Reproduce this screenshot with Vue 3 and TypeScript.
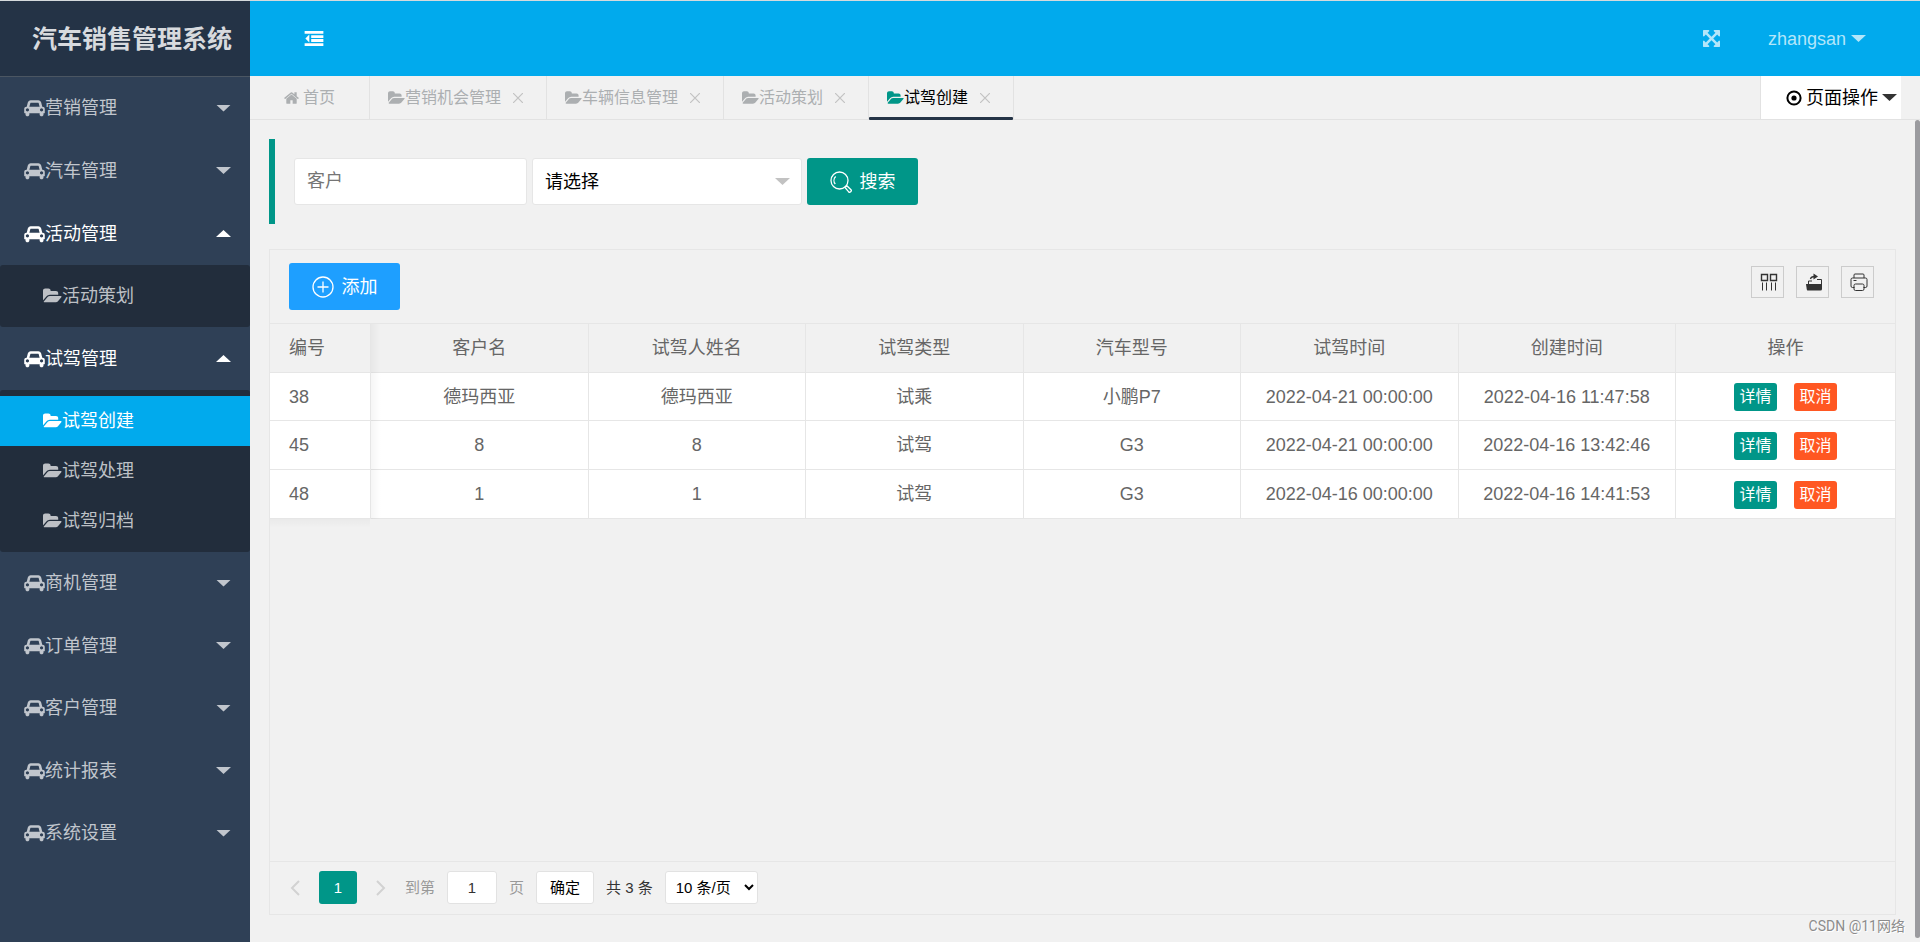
<script setup lang="ts">
import { ref } from 'vue'

interface MenuChild { label: string; active?: boolean }
interface MenuGroup { label: string; open?: boolean; children?: MenuChild[] }
interface Tab { label: string; active?: boolean }
interface DriveRow {
  id: number
  customer: string
  driver: string
  type: string
  model: string
  driveTime: string
  createTime: string
}

const carPath = 'M480 1088q0-66-47-113t-113-47-113 47-47 113 47 113 113 47 113-47 47-113zm36-320h1016l-89-357q-2-8-14-17.5t-21-9.5h-768q-9 0-21 9.5t-14 17.5zm1372 320q0-66-47-113t-113-47-113 47-47 113 47 113 113 47 113-47 47-113zm160-96v384q0 14-9 23t-23 9h-96v128q0 80-56 136t-136 56-136-56-56-136v-128h-1024v128q0 80-56 136t-136 56-136-56-56-136v-128h-96q-14 0-23-9t-9-23v-384q0-93 65.5-158.5t158.5-65.5h28l105-419q23-94 104-157.5t179-63.5h768q98 0 179 63.5t104 157.5l105 419h28q93 0 158.5 65.5t65.5 158.5z'
const folderPath = 'M1815 952q0 31-31 66l-336 396q-43 51-120.5 86.5t-143.5 35.5h-1088q-34 0-60.5-13t-26.5-43q0-31 31-66l336-396q43-51 120.5-86.5t143.5-35.5h1088q34 0 60.5 13t26.5 43zm-343-344v160h-832q-94 0-197 47.5t-164 119.5l-337 396-5 6q0-4-.5-12.5t-.5-12.5v-960q0-92 66-158t158-66h320q92 0 158 66t66 158v32h544q92 0 158 66t66 158z'
const homePath = 'M1472 992v480q0 26-19 45t-45 19h-384v-384h-256v384h-384q-26 0-45-19t-19-45v-480q0-1 .5-3t.5-3l575-474 575 474q1 2 1 6zm223-69l-62 74q-8 9-21 11h-3q-13 0-21-7l-692-577-692 577q-12 8-24 7-13-2-21-11l-62-74q-8-10-7-23.5t11-21.5l719-599q32-26 76-26t76 26l244 204v-195q0-14 9-23t23-9h192q14 0 23 9t9 23v408l219 182q10 8 11 21.5t-7 23.5z'
const expandPath = 'M1411 541l-355 355 355 355 144-144q29-31 70-14 39 17 39 59v448q0 26-19 45t-45 19h-448q-42 0-59-40-17-39 14-69l144-144-355-355-355 355 144 144q31 30 14 69-17 40-59 40h-448q-26 0-45-19t-19-45v-448q0-42 40-59 39-17 69 14l144 144 355-355-355-355-144 144q-19 19-45 19-12 0-24-5-40-17-40-59v-448q0-26 19-45t45-19h448q42 0 59 40 17 39-14 69l-144 144 355 355 355-355-144-144q-31-30-14-69 17-40 59-40h448q26 0 45 19t19 45v448q0 42-39 59-13 5-25 5-26 0-45-19z'

const menu: MenuGroup[] = [
  { label: '营销管理' },
  { label: '汽车管理' },
  { label: '活动管理', open: true, children: [{ label: '活动策划' }] },
  {
    label: '试驾管理',
    open: true,
    children: [{ label: '试驾创建', active: true }, { label: '试驾处理' }, { label: '试驾归档' }],
  },
  { label: '商机管理' },
  { label: '订单管理' },
  { label: '客户管理' },
  { label: '统计报表' },
  { label: '系统设置' },
]

const tabs: Tab[] = [
  { label: '营销机会管理' },
  { label: '车辆信息管理' },
  { label: '活动策划' },
  { label: '试驾创建', active: true },
]

const columns: string[] = ['编号', '客户名', '试驾人姓名', '试驾类型', '汽车型号', '试驾时间', '创建时间', '操作']

const rows: DriveRow[] = [
  { id: 38, customer: '德玛西亚', driver: '德玛西亚', type: '试乘', model: '小鹏P7', driveTime: '2022-04-21 00:00:00', createTime: '2022-04-16 11:47:58' },
  { id: 45, customer: '8', driver: '8', type: '试驾', model: 'G3', driveTime: '2022-04-21 00:00:00', createTime: '2022-04-16 13:42:46' },
  { id: 48, customer: '1', driver: '1', type: '试驾', model: 'G3', driveTime: '2022-04-16 00:00:00', createTime: '2022-04-16 14:41:53' },
]

const customer = ref('')
const driveType = ref('')
const jumpPage = ref('1')
const pageSize = ref('10')
</script>

<template>
  <div class="app">
    <aside class="sidebar">
      <h1 class="logo">汽车销售管理系统</h1>
      <nav class="menu">
        <div v-for="group in menu" :key="group.label" class="group" :class="{ open: group.open }">
          <button type="button" class="group-title" :aria-expanded="!!group.open">
            <svg class="car" viewBox="0 0 2048 1792" aria-hidden="true"><path :d="carPath" /></svg>
            <span>{{ group.label }}</span>
            <i class="caret"></i>
          </button>
          <div v-if="group.children" class="submenu">
            <a v-for="item in group.children" :key="item.label" href="#" class="sub-item" :class="{ active: item.active }">
              <svg class="folder" viewBox="-64 0 1920 1792" aria-hidden="true"><path :d="folderPath" /></svg>
              <span>{{ item.label }}</span>
            </a>
          </div>
        </div>
      </nav>
    </aside>

    <div class="main">
      <header class="topbar">
        <button type="button" class="icon-btn" aria-label="收起菜单">
          <svg class="outdent" viewBox="0 0 20 16" aria-hidden="true">
            <path d="M0 0h20v3H0zM7 4.400h13v3H7zM7 8.600h13v3H7zM0 13h20v3H0zM5 3.800v8.400L0.800 8z" />
          </svg>
        </button>
        <div class="top-right">
          <button type="button" class="icon-btn" aria-label="全屏">
            <svg class="expand" viewBox="128 128 1536 1536" aria-hidden="true"><path :d="expandPath" /></svg>
          </button>
          <button type="button" class="user">zhangsan<i class="caret"></i></button>
        </div>
      </header>

      <div class="tabbar">
        <a href="#" class="tab home">
          <svg class="home-icon" viewBox="64 128 1664 1536" aria-hidden="true"><path :d="homePath" /></svg>
          <span>首页</span>
        </a>
        <div v-for="tab in tabs" :key="tab.label" class="tab" :class="{ active: tab.active }">
          <a href="#" class="tab-link">
            <svg class="folder" viewBox="-64 0 1920 1792" aria-hidden="true"><path :d="folderPath" /></svg>
            <span>{{ tab.label }}</span>
          </a>
          <button type="button" class="close" aria-label="关闭">
            <svg viewBox="0 0 10 10" aria-hidden="true"><path d="M0 0L10 10M10 0L0 10" /></svg>
          </button>
        </div>
        <button type="button" class="page-ops">
          <svg class="target" viewBox="0 0 16 16" aria-hidden="true">
            <circle cx="8" cy="8" r="6.600" fill="none" stroke="currentColor" stroke-width="2" />
            <circle cx="8" cy="8" r="2.600" />
          </svg>
          <span>页面操作</span>
          <i class="caret"></i>
        </button>
      </div>

      <main class="content">
        <form class="search" @submit.prevent>
          <input v-model="customer" type="text" class="field" placeholder="客户" aria-label="客户" />
          <div class="select-wrap">
            <select v-model="driveType" class="field" aria-label="试驾类型">
              <option value="">请选择</option>
              <option value="1">试乘</option>
              <option value="2">试驾</option>
            </select>
            <i class="caret"></i>
          </div>
          <button type="submit" class="btn green">
            <svg viewBox="0 0 22 22" aria-hidden="true">
              <circle cx="9.500" cy="9.500" r="8.500" />
              <path d="M5.300 13a5.500 5.500 0 0 1 0.400-7.500" />
              <path d="M15 16.500l1.800-1.800 4.200 4q0.800 1-0.300 2t-2 0.200z" />
            </svg>
            <span>搜索</span>
          </button>
        </form>

        <section class="grid-box">
          <div class="toolbar">
            <button type="button" class="btn blue">
              <svg viewBox="0 0 22 22" aria-hidden="true">
                <circle cx="11" cy="11" r="10" />
                <path d="M11 5.500v11M5.500 11h11" />
              </svg>
              <span>添加</span>
            </button>
            <div class="tools">
              <button type="button" class="tool" aria-label="筛选列">
                <svg viewBox="0 0 18 18" aria-hidden="true">
                  <path d="M1.500 1.500h6v6h-6zM10.500 1.500h6v6h-6z" />
                  <path class="thin" d="M2.500 9.500v8M6.500 9.500v8M11.500 9.500v8M15.500 9.500v8" />
                </svg>
              </button>
              <button type="button" class="tool" aria-label="导出">
                <svg viewBox="0 0 18 18" aria-hidden="true">
                  <path class="solid" d="M1 11h16v5q0 1.500-1.500 1.500h-13Q2 17.500 1.700 16z" />
                  <path class="thin" d="M3.500 11V8H7M12 6.500h4.500V11" />
                  <path d="M5.500 6Q6 3.500 10 3.500" />
                  <path class="solid" d="M8.500 0.500L13 3.500 8.500 6.500z" />
                </svg>
              </button>
              <button type="button" class="tool" aria-label="打印">
                <svg viewBox="0 0 18 18" aria-hidden="true">
                  <path class="thin" d="M4 5V2q0-1 1-1h8q1 0 1 1v3M4.500 14.500H2.500q-1.500 0-1.500-1.500V6.500Q1 5 2.500 5h13Q17 5 17 6.500V13q0 1.500-1.500 1.500h-2M5.500 11h7q1.500 0 1.500 1.500v3.500q0 1.500-1.500 1.500h-7q-1.500 0-1.500-1.500v-3.500q0-1.500 1.500-1.500M3.500 7.500h3" />
                </svg>
              </button>
            </div>
          </div>

          <div class="table-area">
            <table class="table">
              <thead>
                <tr>
                  <th v-for="c in columns" :key="c" scope="col">{{ c }}</th>
                </tr>
              </thead>
              <tbody>
                <tr v-for="r in rows" :key="r.id">
                  <td>{{ r.id }}</td>
                  <td>{{ r.customer }}</td>
                  <td>{{ r.driver }}</td>
                  <td>{{ r.type }}</td>
                  <td>{{ r.model }}</td>
                  <td>{{ r.driveTime }}</td>
                  <td>{{ r.createTime }}</td>
                  <td>
                    <div class="actions">
                      <button type="button" class="mini detail">详情</button>
                      <button type="button" class="mini cancel">取消</button>
                    </div>
                  </td>
                </tr>
              </tbody>
            </table>
          </div>

          <div class="pager">
            <button type="button" class="arrow" aria-label="上一页" disabled>
              <svg viewBox="0 0 10 16" aria-hidden="true"><path d="M9 1L2 8l7 7" /></svg>
            </button>
            <button type="button" class="current" aria-current="page">1</button>
            <button type="button" class="arrow" aria-label="下一页" disabled>
              <svg viewBox="0 0 10 16" aria-hidden="true"><path d="M1 1l7 7-7 7" /></svg>
            </button>
            <label class="jump">到第<input v-model="jumpPage" type="text" />页</label>
            <button type="button" class="confirm">确定</button>
            <span class="total">共 3 条</span>
            <select v-model="pageSize" class="size" aria-label="每页条数">
              <option value="10">10 条/页</option>
              <option value="20">20 条/页</option>
              <option value="30">30 条/页</option>
            </select>
          </div>
        </section>
        <div class="scroll-thumb" aria-hidden="true"></div>
      </main>
    </div>
    <div class="watermark">CSDN @11网络</div>
  </div>
</template>

<style>
body {
  margin: 0;
  background: #f1f1f1;
}
</style>

<style scoped>
.app,
.app * {
  box-sizing: border-box;
}
.app {
  position: relative;
  display: flex;
  min-height: 100vh;
  border-top: 1px solid #d5dadd;
  background: #f1f1f1;
  font-family: "Liberation Sans", "Noto Sans CJK SC", sans-serif;
  font-size: 18px;
  line-height: 24px;
  color: #666;
}
button,
input,
select {
  font: inherit;
  margin: 0;
}
button {
  padding: 0;
  border: 0;
  background: none;
  color: inherit;
  cursor: pointer;
}
a {
  color: inherit;
  text-decoration: none;
}
svg {
  display: block;
  flex: none;
  fill: currentColor;
}
.caret {
  flex: none;
  width: 15px;
  height: 7px;
  background: currentColor;
  clip-path: polygon(0 0, 100% 0, 50% 100%);
}

/* Sidebar */
.sidebar {
  flex: none;
  width: 250px;
  background: #2f4056;
  color: #c1c6cd;
}
.logo {
  height: 76px;
  margin: 0;
  padding-left: 32px;
  border-bottom: 1px solid #4b5662;
  background: #243346;
  color: #d7dade;
  font-size: 25px;
  line-height: 76px;
  white-space: nowrap;
}
.group-title {
  display: flex;
  align-items: center;
  width: 100%;
  height: 62px;
  padding: 0 19px 0 24px;
}
.group:nth-child(even) .group-title,
.group.open .group-title {
  height: 63px;
}
.group-title .caret {
  margin-left: auto;
}
.group.open .group-title {
  color: #fff;
}
.group.open .caret {
  transform: rotate(180deg);
}
.car {
  width: 21px;
  height: 18px;
}
.submenu {
  padding: 6px 0;
  border-radius: 3px;
  background: #222d3c;
}
.sub-item {
  display: flex;
  align-items: center;
  height: 50px;
  padding-left: 43px;
  color: #bdc0c5;
}
.sub-item.active {
  background: #01aaed;
  color: #fff;
}
.sub-item .folder {
  width: 19px;
  height: 18px;
}

/* Header */
.main {
  display: flex;
  flex: 1;
  flex-direction: column;
  min-width: 0;
}
.topbar {
  display: flex;
  align-items: center;
  justify-content: space-between;
  height: 75px;
  padding: 0 54px;
  background: #01aaed;
  color: #fff;
}
.outdent {
  width: 20px;
  height: 15px;
}
.top-right {
  display: flex;
  align-items: center;
  gap: 48px;
  color: #b3e6fa;
}
.expand {
  width: 17px;
  height: 17px;
}
.user {
  display: flex;
  align-items: center;
  gap: 5px;
}

/* Tabs */
.tabbar {
  display: flex;
  height: 44px;
  padding-right: 19px;
  border-bottom: 1px solid #e2e2e2;
  color: #acafb1;
  font-size: 16px;
}
.tab {
  position: relative;
  display: flex;
  align-items: center;
  gap: 6px;
  height: 43px;
  padding: 0 17px 0 18px;
  border-right: 1px solid #e2e2e2;
  white-space: nowrap;
}
.tab.home {
  width: 120px;
  padding: 0 0 0 34px;
  gap: 4px;
}
.home-icon {
  width: 15px;
  height: 14px;
}
.tab-link {
  display: flex;
  align-items: center;
}
.tab .folder {
  width: 17px;
  height: 16px;
}
.close {
  display: grid;
  place-items: center;
  width: 22px;
  height: 22px;
}
.close svg {
  width: 10px;
  height: 10px;
  stroke: #c2c2c2;
  stroke-width: 1.2;
}
.tab.active {
  color: #000;
}
.tab.active .folder {
  color: #009688;
}
.tab.active::after {
  content: "";
  position: absolute;
  right: 0;
  bottom: -1px;
  left: 0;
  height: 3px;
  border-radius: 1px;
  background: #243346;
}
.page-ops {
  display: flex;
  align-items: center;
  gap: 4px;
  width: 141px;
  height: 43px;
  margin-left: auto;
  padding-left: 25px;
  border-left: 1px solid #e2e2e2;
  background: #fff;
  color: #000;
  font-size: 18px;
}
.target {
  width: 16px;
  height: 16px;
}
.page-ops .caret {
  color: #333;
}

/* Content */
.content {
  position: relative;
  display: flex;
  flex: 1;
  flex-direction: column;
  gap: 25px;
  padding: 19px 24px 27px 19px;
}
.scroll-thumb {
  position: absolute;
  top: 0;
  right: 0;
  bottom: 4px;
  width: 5px;
  border-radius: 3px;
  background: #9b9b9f;
}
.search {
  display: flex;
  gap: 5px;
  padding: 19px;
  border-left: 6px solid #009688;
}
.field {
  width: 233px;
  height: 47px;
  padding: 0 12px;
  border: 1px solid #e6e6e6;
  border-radius: 3px;
  outline: 0;
  background: #fff;
  color: #000;
}
.field::placeholder {
  color: #757575;
}
.select-wrap {
  position: relative;
  width: 270px;
}
.select-wrap .field {
  width: 100%;
  appearance: none;
}
.select-wrap .caret {
  position: absolute;
  top: 20px;
  right: 12px;
  color: #c2c2c2;
  pointer-events: none;
}
.btn {
  display: flex;
  align-items: center;
  justify-content: center;
  gap: 8px;
  width: 111px;
  height: 47px;
  border-radius: 3px;
  color: #fff;
}
.btn svg {
  width: 22px;
  height: 22px;
  fill: none;
  stroke: currentColor;
  stroke-width: 1.3;
}
.green {
  background: #009688;
}
.blue {
  background: #1e9fff;
}

/* Table */
.grid-box {
  display: flex;
  flex: 1;
  flex-direction: column;
  border: 1px solid #e6e6e6;
}
.toolbar {
  display: flex;
  justify-content: space-between;
  padding: 13px 21px 13px 19px;
  border-bottom: 1px solid #e6e6e6;
}
.tools {
  display: flex;
  gap: 12px;
  padding-top: 3px;
}
.tool {
  display: grid;
  place-items: center;
  width: 33px;
  height: 32px;
  padding-left: 2px;
  border: 1px solid #ccc;
  color: #333;
}
.tool svg {
  width: 18px;
  height: 18px;
  fill: none;
  stroke: currentColor;
  stroke-width: 1.4;
}
.tool .thin {
  stroke-width: 1;
}
.tool .solid {
  fill: currentColor;
  stroke: none;
}
.table-area {
  flex: 1;
}
.table {
  width: 100%;
  border-collapse: separate;
  border-spacing: 0;
  table-layout: fixed;
}
.table th,
.table td {
  height: 49px;
  padding: 0 8px;
  border-right: 1px solid #e6e6e6;
  border-bottom: 1px solid #e6e6e6;
  font-weight: 400;
  text-align: center;
  white-space: nowrap;
}
.table tbody tr:first-child td {
  height: 48px;
}
.table td {
  background: #fff;
}
.table th:last-child,
.table td:last-child {
  width: 219px;
  border-right: 0;
}
.table th:first-child,
.table td:first-child {
  position: relative;
  width: 101px;
  padding-left: 19px;
  text-align: left;
}
.table th:first-child::after,
.table td:first-child::after {
  content: "";
  position: absolute;
  top: 0;
  bottom: -1px;
  left: 101px;
  width: 10px;
  background: linear-gradient(to right, rgba(0, 0, 0, 0.04), transparent);
}
.table tbody tr:last-child td:first-child::before {
  content: "";
  position: absolute;
  top: 49px;
  right: 0;
  left: 0;
  height: 9px;
  background: linear-gradient(rgba(0, 0, 0, 0.03), transparent);
}
.actions {
  display: flex;
  justify-content: center;
  gap: 17px;
  padding-top: 1px;
}
.mini {
  width: 43px;
  height: 28px;
  border-radius: 3px;
  color: #fff;
  font-size: 16px;
  line-height: 28px;
}
.detail {
  background: #009688;
}
.cancel {
  background: #ff5722;
}

/* Pager */
.pager {
  display: flex;
  align-items: center;
  height: 53px;
  padding: 0 0 1px 20px;
  border-top: 1px solid #e6e6e6;
  color: #333;
  font-size: 15px;
}
.arrow svg {
  width: 10px;
  height: 16px;
  fill: none;
  stroke: #d2d2d2;
  stroke-width: 2;
}
.current {
  width: 38px;
  height: 33px;
  margin: 0 19px;
  border-radius: 3px;
  background: #009688;
  color: #fff;
}
.jump {
  display: flex;
  align-items: center;
  gap: 12px;
  margin-left: 19px;
  color: #999;
}
.jump input {
  width: 50px;
  height: 33px;
  padding: 0 4px;
  border: 1px solid #e2e2e2;
  border-radius: 3px;
  background: #fff;
  color: #333;
  text-align: center;
}
.confirm {
  width: 58px;
  height: 33px;
  margin: 0 12px;
  border: 1px solid #e2e2e2;
  border-radius: 3px;
  background: #fff;
  color: #000;
}
.size {
  width: 93px;
  height: 33px;
  margin-left: 12px;
  padding: 0 6px;
  border: 1px solid #e2e2e2;
  border-radius: 3px;
  background: #fff;
  color: #000;
}
.watermark {
  position: absolute;
  right: 15px;
  bottom: 5px;
  color: #8c8c8c;
  font-family: Roboto, "Noto Sans CJK SC", sans-serif;
  font-size: 14px;
  line-height: 22px;
  text-shadow: 1px 1px 0 #fff;
}
</style>
